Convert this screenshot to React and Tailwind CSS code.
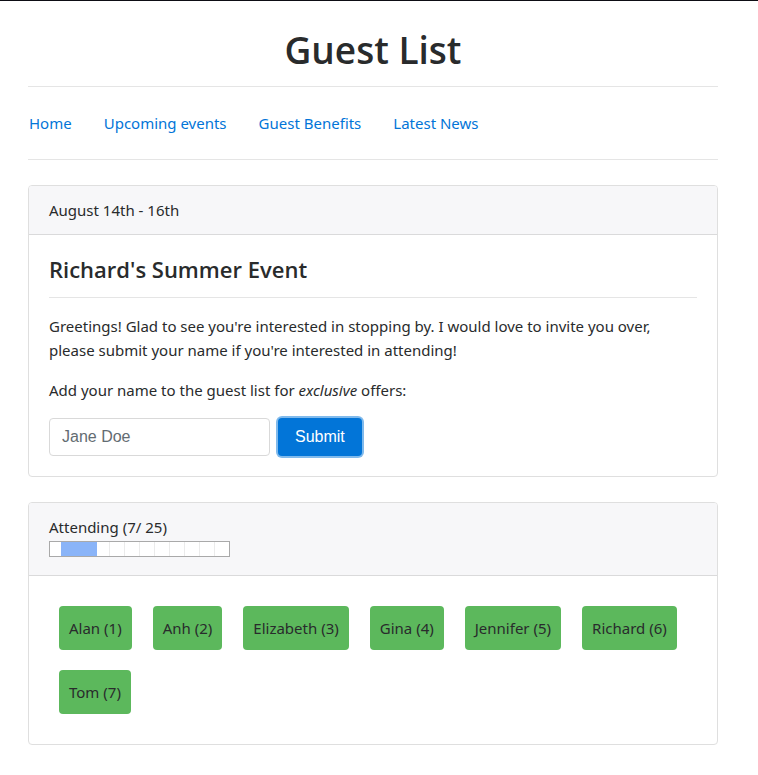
const links = ["Home", "Upcoming events", "Guest Benefits", "Latest News"];
const guests = ["Alan", "Anh", "Elizabeth", "Gina", "Jennifer", "Richard", "Tom"];
const capacity = 25;

function Rule() {
  return <hr className="border-t border-[#e5e5e5]" />;
}

function Card({ header, children }) {
  return (
    <section className="rounded border border-[#dfdfdf] bg-white">
      <div className="rounded-t-[3px] border-b border-[#dadadb] bg-[#f7f7f9] px-5 py-3">{header}</div>
      {children}
    </section>
  );
}

function AttendanceBar() {
  return (
    <div
      role="progressbar"
      aria-label="Guests attending"
      className="mt-0.5 mb-1.5 flex h-4 w-[181px] border border-[#a9a9a9] bg-white"
    >
      <span className="w-[11px]" />
      <span className="w-9 bg-[#8ab4f8]" />
      <span className="w-[13px] border-r border-[#ebebeb]" />
      {Array.from({ length: 7 }, (_, i) => (
        <span key={i} className="w-[15px] border-r border-[#ebebeb]" />
      ))}
    </div>
  );
}

export default function App() {
  return (
    <div className="border-t border-[#0d0d14] bg-white pr-10 pb-7 pl-7 font-['Noto_Sans','Open_Sans',sans-serif] text-[15px] leading-6 text-[#292b2c]">
      <h1 className="pt-6 pb-3 text-center font-['Open_Sans','Noto_Sans',sans-serif] text-[37px] leading-[49px] font-semibold">
        Guest List
      </h1>
      <Rule />
      <nav className="my-6 flex flex-wrap gap-8 px-px">
        {links.map((label) => (
          <a key={label} href="#" className="text-[#0275d8]">
            {label}
          </a>
        ))}
      </nav>
      <Rule />
      <main className="mt-[25px] flex flex-col gap-[25px]">
        <Card header="August 14th - 16th">
          <div className="p-5">
            <h2 className="mb-3.5 font-['Open_Sans','Noto_Sans',sans-serif] text-[22px] leading-7 font-semibold">
              Richard's Summer Event
            </h2>
            <Rule />
            <p className="mt-4">
              Greetings! Glad to see you're interested in stopping by. I would love to invite you over, please submit
              your name if you're interested in attending!
            </p>
            <form onSubmit={(e) => e.preventDefault()}>
              <label htmlFor="guest-name" className="mt-4 mb-4 block">
                Add your name to the guest list for <em>exclusive</em> offers:
              </label>
              <div className="flex gap-2 font-['Liberation_Sans',Arial,sans-serif] text-base">
                <input
                  id="guest-name"
                  type="text"
                  placeholder="Jane Doe"
                  className="h-[38px] w-[221px] rounded border border-[#d9d9d9] px-3 placeholder:text-[#636c72]"
                />
                <button
                  type="submit"
                  className="h-[38px] rounded bg-[#0275d8] px-[17px] text-white ring-2 ring-[#80baec]"
                >
                  Submit
                </button>
              </div>
            </form>
          </div>
        </Card>
        <Card
          header={
            <>
              <h2>
                Attending ({guests.length}/ {capacity})
              </h2>
              <AttendanceBar />
            </>
          }
        >
          <ul className="flex flex-wrap gap-x-[21px] gap-y-5 p-[30px]">
            {guests.map((name, i) => (
              <li key={name} className="rounded bg-[#5cb85c] p-2.5">
                {name} ({i + 1})
              </li>
            ))}
          </ul>
        </Card>
      </main>
    </div>
  );
}
